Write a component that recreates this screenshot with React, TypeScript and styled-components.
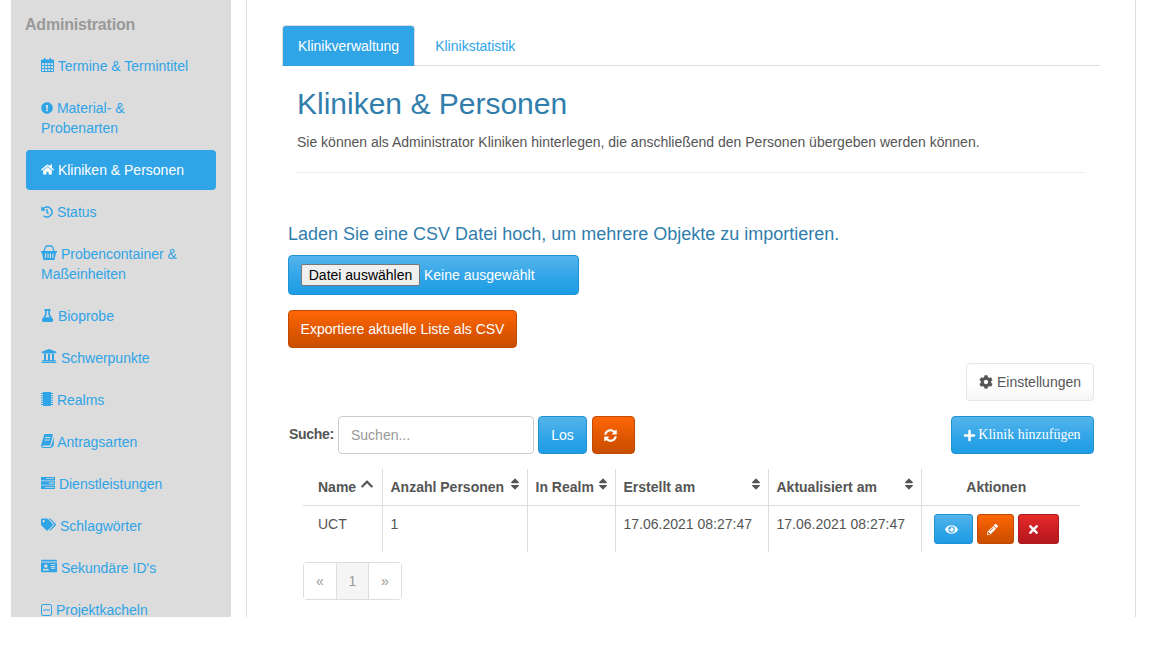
import React from "react";
import styled, { createGlobalStyle, css } from "styled-components";
import {
  FaChevronUp,
  FaCog,
  FaExclamationCircle,
  FaEye,
  FaFlask,
  FaHistory,
  FaHome,
  FaIdCard,
  FaPencilAlt,
  FaPlus,
  FaSort,
  FaSyncAlt,
  FaTags,
  FaTimes,
  FaUniversity,
} from "react-icons/fa";

const GlobalStyle = createGlobalStyle`
  html, body {
    margin: 0;
    padding: 0;
    background: #fff;
    font-family: "Liberation Sans", Arial, sans-serif;
    font-size: 14px;
    line-height: 20px;
    color: #555;
  }
  * {
    box-sizing: border-box;
  }
`;

const Page = styled.div`
  display: flex;
  align-items: flex-start;
  height: 617px;
  padding-left: 11px;
  overflow: hidden;
`;

const Sidebar = styled.aside`
  width: 220px;
  height: 617px;
  flex: none;
  padding: 15px 15px 0 15px;
  background-color: #dcdcdc;
`;

const SideTitle = styled.div`
  margin: 0 0 11px -1px;
  font-size: 16px;
  font-weight: bold;
  letter-spacing: -0.2px;
  color: #999;
`;

const NavList = styled.nav`
  display: flex;
  flex-direction: column;
  gap: 2px;
`;

const NavItem = styled.a<{ $active?: boolean }>`
  display: block;
  padding: 10px 15px;
  border-radius: 4px;
  color: ${(p) => (p.$active ? "#fff" : "#2fa4e7")};
  background-color: ${(p) => (p.$active ? "#2fa4e7" : "transparent")};
  svg {
    vertical-align: -1px;
  }
`;

const Main = styled.main`
  width: 890px;
  height: 617px;
  flex: none;
  margin-left: 15px;
  padding: 25px 35px 0 35px;
  border-left: 1px solid #ddd;
  border-right: 1px solid #ddd;
`;

const Tabs = styled.div`
  display: flex;
  height: 41px;
  border-bottom: 1px solid #ddd;
`;

const Tab = styled.a<{ $active?: boolean }>`
  height: 41px;
  padding: 10px 15px;
  margin-right: 4px;
  border-radius: 4px 4px 0 0;
  color: ${(p) => (p.$active ? "#fff" : "#2fa4e7")};
  background-color: ${(p) => (p.$active ? "#2fa4e7" : "transparent")};
  border: 1px solid ${(p) => (p.$active ? "#ddd" : "transparent")};
  border-bottom-color: transparent;
`;

const Intro = styled.header`
  margin: 0 15px;
  padding: 20px 0 20px;
  border-bottom: 1px solid #eee;
`;

const Title = styled.h1`
  margin: 0;
  font-size: 30px;
  font-weight: normal;
  line-height: 36px;
  color: #317eac;
`;

const Lead = styled.p`
  margin: 10px 0 0;
`;

const CsvHeading = styled.h4`
  margin: 51px 0 0 6px;
  font-size: 18px;
  font-weight: normal;
  line-height: 20px;
  color: #317eac;
`;

const blue = css`
  background-image: linear-gradient(#54b4eb, #2fa4e7 60%, #1d9ce5);
  border: 1px solid #1f92d4;
  color: #fff;
`;

const orange = css`
  background-image: linear-gradient(#ff6707, #dd5600 60%, #c94e00);
  border: 1px solid #c24a00;
  color: #fff;
`;

const red = css`
  background-image: linear-gradient(#e72b2b, #c71c22 60%, #b51a1f);
  border: 1px solid #ad1a1f;
  color: #fff;
`;

const tones = { blue, orange, red };

// $trail is the blank the original leaves after an icon, which pushes it off centre
const Button = styled.button<{
  $tone: "blue" | "orange" | "red";
  $serif?: boolean;
  $width: number;
  $trail?: number;
}>`
  ${(p) => tones[p.$tone]}
  display: inline-flex;
  align-items: center;
  justify-content: center;
  flex: none;
  width: ${(p) => p.$width}px;
  height: 38px;
  padding: 0 ${(p) => p.$trail ?? 0}px 0 0;
  border-radius: 4px;
  font-family: ${(p) => (p.$serif ? '"Liberation Serif", serif' : '"Liberation Sans", sans-serif')};
  font-size: 14px;
  line-height: 20px;
`;

const FileButton = styled.label`
  ${blue}
  display: flex;
  align-items: center;
  width: 291px;
  height: 40px;
  margin: 11px 0 0 6px;
  padding: 0 12px;
  border-radius: 4px;
`;

const NativeFile = styled.span`
  width: 119px;
  height: 22px;
  margin-right: 4px;
  line-height: 20px;
  text-align: center;
  font-size: 14px;
  color: #000;
  background: #efefef;
  border: 1px solid #767676;
  border-radius: 2px;
`;

const ExportRow = styled.div`
  margin: 15px 0 0 6px;
`;

const SettingsRow = styled.div`
  display: flex;
  justify-content: flex-end;
  margin: 15px 6px 0 0;
`;

const SettingsButton = styled.button`
  display: inline-flex;
  align-items: center;
  gap: 4px;
  width: 128px;
  height: 38px;
  justify-content: center;
  font-family: "Liberation Sans", sans-serif;
  font-size: 14px;
  color: #555;
  background-image: linear-gradient(#fff, #fff 60%, #f5f5f5);
  border: 1px solid #e6e6e6;
  border-radius: 4px;
`;

const SearchRow = styled.div`
  display: flex;
  align-items: center;
  gap: 4px;
  margin: 15px 6px 0 7px;
`;

const SearchLabel = styled.label`
  width: 45px;
  margin-top: -2px;
  font-weight: bold;
  letter-spacing: -0.3px;
`;

const SearchInput = styled.input`
  width: 196px;
  height: 38px;
  padding: 8px 12px;
  font-family: "Liberation Sans", sans-serif;
  font-size: 14px;
  border: 1px solid #ccc;
  border-radius: 4px;
  &::placeholder {
    color: #999;
  }
`;

const ReloadButton = styled(Button)`
  margin-left: 1px;
`;

const AddButton = styled(Button)`
  margin-left: auto;
  gap: 2px;
`;

const Table = styled.table`
  width: 777px;
  margin: 15px 0 0 21px;
  border-collapse: collapse;
  table-layout: fixed;
`;

const Th = styled.th<{ $center?: boolean }>`
  position: relative;
  height: 36px;
  padding: ${(p) => (p.$center ? "8px 16px 8px 7px" : "8px")};
  text-align: ${(p) => (p.$center ? "center" : "left")};
  font-weight: bold;
  color: #555;
  border-bottom: 1px solid #ddd;
  border-left: 1px solid #ddd;
  &:first-child {
    border-left: 0;
    padding-left: 15px;
  }
`;

const SortMark = styled.span`
  position: absolute;
  top: 7px;
  right: 5px;
  font-size: 14px;
`;

const NameMark = styled(FaChevronUp)`
  margin-right: 3px;
`;

const Td = styled.td`
  height: 46px;
  padding: 8px;
  vertical-align: top;
  border-left: 1px solid #ddd;
  &:first-child {
    border-left: 0;
    padding-left: 15px;
  }
`;

const RowActions = styled.div`
  display: flex;
  gap: 4px;
  margin-left: 4px;
`;

const ActionButton = styled(Button)`
  height: 30px;
  border-radius: 3px;
`;

const Pager = styled.div`
  display: inline-flex;
  margin: 10px 0 0 21px;
  border: 1px solid #ddd;
  border-radius: 4px;
  height: 38px;
`;

const PagerCell = styled.span<{ $current?: boolean }>`
  width: ${(p) => (p.$current ? 33 : 32)}px;
  line-height: 36px;
  text-align: center;
  color: #999;
  background: ${(p) => (p.$current ? "#f5f5f5" : "#fff")};
  border-left: ${(p) => (p.$current ? "1px solid #ddd" : "0")};
  border-right: ${(p) => (p.$current ? "1px solid #ddd" : "0")};
`;

const CalendarIcon = () => (
  <svg width="13" height="14" viewBox="0 0 13 14" fill="currentColor">
    <path
      fillRule="evenodd"
      d="M3 0h1.500v1.500h4V0H10v1.500h2a1 1 0 0 1 1 1V13a1 1 0 0 1-1 1H1a1 1 0 0 1-1-1V2.500a1 1 0 0 1 1-1h2zM1 5v2h2.200V5zm3.100 0v2h2.200V5zm3.100 0v2h2V5zm2.900 0v2H12V5zM1 8v2h2.200V8zm3.100 0v2h2.200V8zm3.100 0v2h2V8zm2.900 0v2H12V8zM1 11v2h2.200v-2zm3.100 0v2h2.200v-2zm3.100 0v2h2v-2zm2.900 0v2H12v-2z"
    />
  </svg>
);

const BasketIcon = () => (
  <svg width="16" height="15" viewBox="0 0 16 15" fill="none" stroke="currentColor">
    <path d="M3 6.500 4.200 2.600Q4.600 1 6.200 1h3.600q1.600 0 2 1.600L13 6.500" strokeWidth="1.300" />
    <path
      fill="currentColor"
      stroke="none"
      fillRule="evenodd"
      d="M0 6h16v1.800h-1L13.800 14a1 1 0 0 1-1 1H3.200a1 1 0 0 1-1-1L1 7.800H0zM4 8.500V13h1.100V8.500zm2.500 0V13h1.100V8.500zm2.400 0V13H10V8.500zm2.400 0V13h1.100V8.500z"
    />
  </svg>
);

const ChipIcon = () => (
  <svg width="12" height="14" viewBox="0 0 12 14" fill="currentColor">
    <path d="M2 0h8v14H2z" />
    <path
      d="M0 1.500h2M10 1.500h2M0 3.700h2M10 3.700h2M0 5.900h2M10 5.900h2M0 8.100h2M10 8.100h2M0 10.300h2M10 10.300h2M0 12.500h2M10 12.500h2"
      stroke="currentColor"
      strokeWidth="1"
    />
  </svg>
);

const BookIcon = () => (
  <svg width="13" height="14" viewBox="0 0 13 14" fill="currentColor">
    <path
      fillRule="evenodd"
      d="M3.500 0H12L9.200 11.500H2.200q-1 0-.9.800t1 .7h7.600L12.800 3v8.500L10 14H2.500Q0 14 0 12q0-.6.300-1.500zM4.300 3l-.2 1h5.200l.2-1zM3.700 5.500l-.2 1h5.200l.2-1z"
    />
  </svg>
);

const TasksIcon = () => (
  <svg width="14" height="14" viewBox="0 0 14 14" fill="currentColor">
    <path
      fillRule="evenodd"
      d="M0 1h14v3.400H0zM5 2.300v.8h8v-.8zM0 5.300h14v3.400H0zM8 6.600v.8h5v-.8zM0 9.600h14V13H0zM4 10.900v.8h9v-.8z"
    />
  </svg>
);

const MinusBoxIcon = () => (
  <svg width="11" height="12" viewBox="0 0 11 12" fill="none" stroke="currentColor">
    <rect x="0.500" y="0.500" width="10" height="11" rx="1.500" />
    <path d="M2 6h7" />
  </svg>
);

const navItems: { label: string; icon: React.ReactNode; active?: boolean }[] = [
  { label: "Termine & Termintitel", icon: <CalendarIcon /> },
  { label: "Material- & Probenarten", icon: <FaExclamationCircle size={12} /> },
  { label: "Kliniken & Personen", icon: <FaHome size={13} />, active: true },
  { label: "Status", icon: <FaHistory size={12} /> },
  { label: "Probencontainer & Maßeinheiten", icon: <BasketIcon /> },
  { label: "Bioprobe", icon: <FaFlask size={13} /> },
  { label: "Schwerpunkte", icon: <FaUniversity size={16} /> },
  { label: "Realms", icon: <ChipIcon /> },
  { label: "Antragsarten", icon: <BookIcon /> },
  { label: "Dienstleistungen", icon: <TasksIcon /> },
  { label: "Schlagwörter", icon: <FaTags size={15} /> },
  { label: "Sekundäre ID's", icon: <FaIdCard size={16} /> },
  { label: "Projektkacheln", icon: <MinusBoxIcon /> },
];

const columns = [
  { label: "Name", width: 79, mark: <NameMark size={14} /> },
  { label: "Anzahl Personen", width: 145, mark: <FaSort /> },
  { label: "In Realm", width: 88, mark: <FaSort /> },
  { label: "Erstellt am", width: 153, mark: <FaSort /> },
  { label: "Aktualisiert am", width: 153, mark: <FaSort /> },
];

export default function App() {
  return (
    <>
      <GlobalStyle />
      <Page>
        <Sidebar>
          <SideTitle>Administration</SideTitle>
          <NavList>
            {navItems.map((item) => (
              <NavItem key={item.label} $active={item.active}>
                {item.icon} {item.label}
              </NavItem>
            ))}
          </NavList>
        </Sidebar>
        <Main>
          <Tabs>
            <Tab $active>Klinikverwaltung</Tab>
            <Tab>Klinikstatistik</Tab>
          </Tabs>
          <Intro>
            <Title>Kliniken &amp; Personen</Title>
            <Lead>
              Sie können als Administrator Kliniken hinterlegen, die anschließend den Personen
              übergeben werden können.
            </Lead>
          </Intro>
          <CsvHeading>Laden Sie eine CSV Datei hoch, um mehrere Objekte zu importieren.</CsvHeading>
          <FileButton>
            <NativeFile>Datei auswählen</NativeFile>
            Keine ausgewählt
          </FileButton>
          <ExportRow>
            <Button $tone="orange" $width={229}>
              Exportiere aktuelle Liste als CSV
            </Button>
          </ExportRow>
          <SettingsRow>
            <SettingsButton>
              <FaCog /> Einstellungen
            </SettingsButton>
          </SettingsRow>
          <SearchRow>
            <SearchLabel>Suche:</SearchLabel>
            <SearchInput placeholder="Suchen..." />
            <Button $tone="blue" $width={49}>
              Los
            </Button>
            <ReloadButton $tone="orange" $width={43} $trail={6}>
              <FaSyncAlt size={13} />
            </ReloadButton>
            <AddButton $tone="blue" $serif $width={143} $trail={1}>
              <FaPlus size={13} /> Klinik hinzufügen
            </AddButton>
          </SearchRow>
          <Table>
            <colgroup>
              {columns.map((c) => (
                <col key={c.label} width={c.width} />
              ))}
              <col width={159} />
            </colgroup>
            <thead>
              <tr>
                {columns.map((c) => (
                  <Th key={c.label}>
                    {c.label}
                    <SortMark>{c.mark}</SortMark>
                  </Th>
                ))}
                <Th $center>Aktionen</Th>
              </tr>
            </thead>
            <tbody>
              <tr>
                <Td>UCT</Td>
                <Td>1</Td>
                <Td />
                <Td>17.06.2021 08:27:47</Td>
                <Td>17.06.2021 08:27:47</Td>
                <Td>
                  <RowActions>
                    <ActionButton $tone="blue" $width={39} $trail={4}>
                      <FaEye size={13} />
                    </ActionButton>
                    <ActionButton $tone="orange" $width={37} $trail={6}>
                      <FaPencilAlt size={11} />
                    </ActionButton>
                    <ActionButton $tone="red" $width={41} $trail={9}>
                      <FaTimes size={13} />
                    </ActionButton>
                  </RowActions>
                </Td>
              </tr>
            </tbody>
          </Table>
          <Pager>
            <PagerCell>«</PagerCell>
            <PagerCell $current>1</PagerCell>
            <PagerCell>»</PagerCell>
          </Pager>
        </Main>
      </Page>
    </>
  );
}
